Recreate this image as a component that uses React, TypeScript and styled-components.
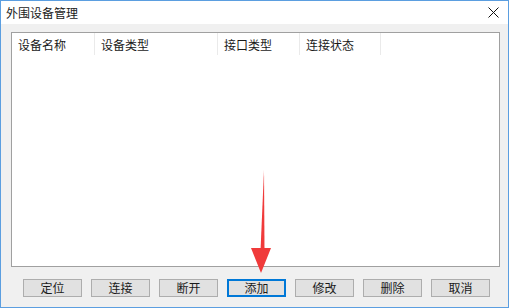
import React from "react";
import styled, { createGlobalStyle } from "styled-components";

const Global = createGlobalStyle`
  html, body { margin: 0; padding: 0; }
  body {
    font-family: "Noto Sans CJK SC", "Noto Sans", sans-serif;
    font-size: 12px;
    color: #1a1a1a;
    background: #f0f0f0;
  }
  * { box-sizing: border-box; }
`;

const Window = styled.div`
  position: relative;
  width: 509px;
  height: 308px;
  border: 1px solid #5b9ee0;
  background: #f0f0f0;
  display: flex;
  flex-direction: column;
  overflow: hidden;
`;

const TitleBar = styled.div`
  height: 23px;
  background: #ffffff;
  display: flex;
  align-items: center;
  justify-content: space-between;
  padding: 0 0 0 5px;
  flex-shrink: 0;
`;

const Title = styled.span`
  font-size: 12px;
  line-height: 14px;
  margin-top: 1px;
`;

const CloseBtn = styled.div`
  width: 29px;
  height: 23px;
  display: flex;
  align-items: center;
  justify-content: center;
`;

const Body = styled.div`
  flex: 1;
  display: flex;
  flex-direction: column;
  padding: 8px 8px 10px 10px;
`;

const ListBox = styled.div`
  height: 235px;
  background: #ffffff;
  border: 1px solid #a0a0a0;
  display: flex;
  flex-direction: column;
`;

const Header = styled.div`
  display: flex;
  height: 22px;
  background: #ffffff;
`;

const HeaderCell = styled.div<{ w: number }>`
  width: ${({ w }) => w}px;
  flex-shrink: 0;
  border-right: 1px solid #eaeaea;
  padding-left: 6px;
  display: flex;
  align-items: center;
  font-size: 12px;
  color: #1a1a1a;
`;

const ButtonRow = styled.div`
  display: flex;
  gap: 9px;
  margin-top: 12px;
  padding-left: 12px;
`;

const Button = styled.button<{ focused?: boolean }>`
  width: 59px;
  height: 18px;
  padding: 0;
  background: #e1e1e1;
  border: 1px solid ${({ focused }) => (focused ? "#0078d7" : "#adadad")};
  box-shadow: ${({ focused }) => (focused ? "inset 0 0 0 1px #0078d7" : "none")};
  font-family: "Noto Sans CJK SC", "Noto Sans", sans-serif;
  font-size: 12px;
  line-height: 14px;
  color: #1a1a1a;
`;

const Arrow = styled.svg`
  position: absolute;
  left: 244px;
  top: 165px;
  pointer-events: none;
`;

const columns = [
  { label: "设备名称", w: 83 },
  { label: "设备类型", w: 123 },
  { label: "接口类型", w: 82 },
  { label: "连接状态", w: 81 },
];

const buttons = ["定位", "连接", "断开", "添加", "修改", "删除", "取消"];

const App = () => {
  return (
    <>
      <Global />
      <Window>
        <TitleBar>
          <Title>外围设备管理</Title>
          <CloseBtn>
            <svg width="11" height="11" viewBox="0 0 11 11">
              <path d="M0.5 0.5 L10.5 10.5 M10.5 0.5 L0.5 10.5" stroke="#111" strokeWidth="1" />
            </svg>
          </CloseBtn>
        </TitleBar>
        <Body>
          <ListBox>
            <Header>
              {columns.map((c) => (
                <HeaderCell key={c.label} w={c.w}>
                  {c.label}
                </HeaderCell>
              ))}
            </Header>
          </ListBox>
          <ButtonRow>
            {buttons.map((b) => (
              <Button key={b} focused={b === "添加"}>
                {b}
              </Button>
            ))}
          </ButtonRow>
        </Body>
        <Arrow width="30" height="110" viewBox="0 0 30 110">
          <path d="M19 4 L19.5 85 L15.5 85 Z" fill="#f03a3a" />
          <path d="M6 82 L26 82 L16 107 Z" fill="#f03a3a" />
        </Arrow>
      </Window>
    </>
  );
};

export default App;
